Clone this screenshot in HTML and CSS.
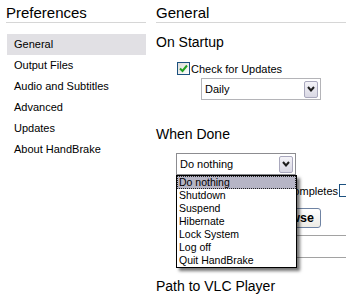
FILE: index.html
```html
<!DOCTYPE html>
<html lang="en">

<head>
    <meta charset="UTF-8">
    <meta name="viewport" content="width=device-width, initial-scale=1.0">
    <title>Preferences</title>
    <link rel="stylesheet" href="styles.css">
</head>

<body>
    <div class="prefs">
        <aside class="sidebar">
            <h1 class="pane-title">Preferences</h1>
            <ul class="nav">
                <li class="active">General</li>
                <li>Output Files</li>
                <li>Audio and Subtitles</li>
                <li>Advanced</li>
                <li>Updates</li>
                <li>About HandBrake</li>
            </ul>
        </aside>

        <main class="content">
            <h1 class="pane-title">General</h1>

            <h2 class="section">On Startup</h2>
            <label class="check-row">
                <span class="checkbox">
                    <svg width="11" height="11" viewBox="0 0 11 11">
                        <path d="M2 5.5 L4.5 8 L9 2.5" fill="none" stroke="#21a121" stroke-width="2" />
                    </svg>
                </span>
                Check for Updates
            </label>
            <div class="select select-daily">
                <span>Daily</span>
                <span class="arrow">
                    <svg width="8" height="6" viewBox="0 0 8 6">
                        <path d="M1 1 L4 4.5 L7 1" fill="none" stroke="#1e1e1e" stroke-width="2" />
                    </svg>
                </span>
            </div>

            <h2 class="section when-done">When Done</h2>
            <div class="combo">
                <div class="select focused">
                    <span>Do nothing</span>
                    <span class="arrow">
                        <svg width="8" height="6" viewBox="0 0 8 6">
                            <path d="M1 1 L4 4.5 L7 1" fill="none" stroke="#1e1e1e" stroke-width="2" />
                        </svg>
                    </span>
                </div>
                <ul class="popup">
                    <li class="selected">Do nothing</li>
                    <li>Shutdown</li>
                    <li>Suspend</li>
                    <li>Hibernate</li>
                    <li>Lock System</li>
                    <li>Log off</li>
                    <li>Quit HandBrake</li>
                </ul>
            </div>

            <div class="option-row">
                <span>Notify when encode completes</span>
                <span class="checkbox"></span>
            </div>
            <div class="browse-row">
                <button class="btn">Browse</button>
            </div>
            <div class="rule"></div>
            <div class="rule second"></div>

            <h2 class="section vlc">Path to VLC Player</h2>
        </main>
    </div>
</body>

</html>
```

FILE: styles.css
```css
body {
    margin: 0;
    font-family: "Liberation Sans", Arial, sans-serif;
    font-size: 11px;
    color: #000;
    background: #fff;
}

.prefs {
    display: grid;
    grid-template-columns: 150px 1fr;
    height: 298px;
    overflow: hidden;
}

.sidebar {
    padding: 0 4px 0 6px;
}

.content {
    padding-left: 6px;
    overflow: hidden;
}

.pane-title {
    margin: 0;
    padding-top: 4px;
    font-size: 15px;
    font-weight: normal;
    line-height: 18px;
    border-bottom: 1px solid #d6d6d6;
}

.nav {
    list-style: none;
    margin: 11px 0 0 1px;
    padding: 0;
}

.nav li {
    height: 21px;
    line-height: 21px;
    padding-left: 7px;
}

.nav li.active {
    background: #e1e0e4;
}

.section {
    margin: 10px 0 0;
    font-size: 14px;
    font-weight: normal;
    line-height: 18px;
}

.section.when-done {
    margin-top: 25px;
}

.section.vlc {
    margin-top: 19px;
}

.check-row {
    display: flex;
    align-items: center;
    gap: 1px;
    height: 13px;
    margin: 11px 0 0 21px;
}

.checkbox {
    display: inline-flex;
    align-items: center;
    justify-content: center;
    width: 13px;
    height: 13px;
    box-sizing: border-box;
    border: 1px solid #1c5180;
    background: linear-gradient(135deg, #dcdcd7, #fff);
    flex: none;
}

.select {
    display: flex;
    align-items: center;
    justify-content: space-between;
    width: 120px;
    height: 22px;
    box-sizing: border-box;
    padding-left: 3px;
    border: 1px solid #b4b4b8;
    background: #fff;
}

.select.focused {
    border-color: #8c8c90;
}

.select-daily {
    margin: 3px 0 0 45px;
}

.arrow {
    display: flex;
    align-items: center;
    justify-content: center;
    width: 14px;
    height: 17px;
    box-sizing: border-box;
    margin-right: 2px;
    border: 1px solid #a9a8bd;
    border-radius: 2px;
    background: linear-gradient(#f4f3f8, #d9d8e4);
}

.combo {
    position: relative;
    width: 120px;
    margin: 10px 0 0 20px;
}

.popup {
    position: absolute;
    top: 100%;
    left: 0;
    z-index: 2;
    width: 121px;
    box-sizing: border-box;
    margin: 0;
    padding: 0;
    list-style: none;
    border: 1px solid #000;
    background: #fff;
    box-shadow: 3px 3px 3px rgba(0, 0, 0, 0.55);
    font-size: 10.5px;
}

.popup li {
    height: 13px;
    line-height: 13px;
    padding-left: 2px;
}

.popup li.selected {
    box-sizing: border-box;
    line-height: 11px;
    padding-left: 1px;
    border: 1px dotted #222;
    background: #b6b5c5;
}

.option-row {
    display: flex;
    justify-content: flex-end;
    align-items: center;
    gap: 1px;
    width: 176px;
    height: 13px;
    margin: 9px 0 0 20px;
    white-space: nowrap;
    overflow: hidden;
}

.option-row .checkbox {
    background: #fff;
}

.browse-row {
    display: flex;
    justify-content: flex-end;
    width: 145px;
    margin: 11px 0 0 20px;
}

.btn {
    width: 64px;
    height: 20px;
    padding: 0 6px 0 0;
    text-align: right;
    border: 1px solid #6f83a3;
    border-radius: 3px;
    background: linear-gradient(#fff, #ecebe5);
    font-family: "Liberation Sans", Arial, sans-serif;
    font-size: 12.5px;
    font-weight: bold;
    color: #000;
}

.rule {
    margin: 7px 0 0 20px;
    border-top: 1px solid #a2a2a2;
}

.rule.second {
    margin-top: 21px;
}
```
